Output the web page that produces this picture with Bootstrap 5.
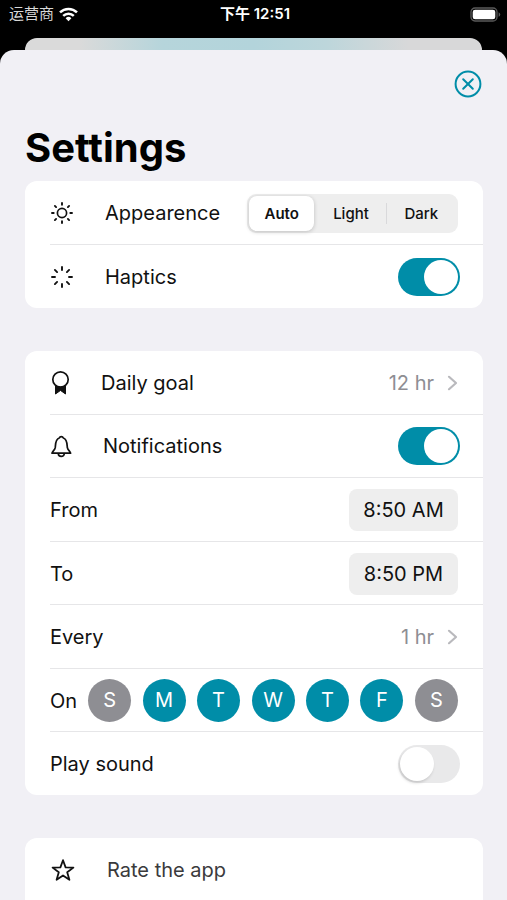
<!DOCTYPE html>
<html lang="en">
<head>
<meta charset="utf-8">
<meta name="viewport" content="width=device-width, initial-scale=1">
<title>Settings</title>
<link href="https://cdn.jsdelivr.net/npm/bootstrap@5.3.0/dist/css/bootstrap.min.css" rel="stylesheet">
<style>
  :root { --teal: #008da8; --sheet: #f1f0f5; --rule: #e6e6e8; --fill: #eeeeee; --muted: #8e8e93; }
  body { font-family: Inter, "Noto Sans CJK SC", sans-serif; font-size: 20px; line-height: 28px; color: #111; }
  .status-bar { height: 38px; padding: 0 6px 10px 9px; font-size: 15px; line-height: 20px; }
  .status-side { flex: 1 1 0; gap: 5px; }
  .carrier { color: #d8d8d8; }
  .clock { font-size: 15px; font-weight: 600; }
  .peek { height: 12px; margin: 0 25px; border-radius: 12px 12px 0 0;
    background: linear-gradient(90deg, #dadada 12%, #b6d5db 30%, #b3d4db 50%, #bdd6db 66%, #d8d8d9 84%); }
  .sheet { background: var(--sheet); border-radius: 14px 14px 0 0; padding: 20px 24px 0 25px; }
  .close-btn { width: 28px; height: 28px; line-height: 0; color: var(--teal); margin-right: 1px; }
  .page-title { font-size: 40px; line-height: 48px; font-weight: 700; color: #000; margin: 26px 0 9px; }
  .panel { background: #fff; border-radius: 12px; margin-bottom: 43px; }
  .panel-short { min-height: 127px; }
  .panel-long { min-height: 444px; }
  .panel-last { margin-bottom: 0; border-radius: 12px 12px 0 0; }
  .setting { flex: 1 1 0; margin-left: 25px; padding-top: 1px; padding-right: 25px; min-height: 62px; }
  .setting + .setting { border-top: 1px solid var(--rule); }
  .setting-toggle { padding-right: 23px; }
  .with-icon { gap: 31px; }
  .soft { color: #3a3a3c; }
  .detail { color: var(--muted); gap: 13px; text-decoration: none; }
  .segments { background: var(--fill); border-radius: 9px; width: 211px; padding: 2px; }
  .segments label { flex: 1 1 0; margin: 0 2px; padding: 7px 0; border: 0; border-radius: 8px; font-size: 15px; line-height: 21px; font-weight: 500; color: #111; text-align: center; cursor: pointer; }
  .segments label:first-of-type { margin-left: 0; }
  .segments .btn-check:checked + label { background: #fff; box-shadow: 0 1px 4px rgba(0,0,0,.2); font-weight: 600; }
  .segments .divider { width: 1px; height: 21px; background: #d9d9db; }
  .toggle { appearance: none; width: 62px; height: 38px; border-radius: 19px; background: #e9e9ea; margin: 0; padding: 2px; cursor: pointer; }
  .toggle::before { content: ""; display: block; width: 34px; height: 34px; border-radius: 50%; background: #fff; box-shadow: -1px 2px 3px rgba(0,0,0,.15); }
  .toggle:checked { background: var(--teal); }
  .toggle:checked::before { margin-left: auto; box-shadow: none; }
  .time-btn { background: var(--fill); border: 0; border-radius: 8px; padding: 7px 14px; min-width: 109px; font-size: 20px; line-height: 28px; color: #111; }
  .days { margin-left: 11px; }
  .day { width: 43px; height: 43px; border: 0; border-radius: 50%; padding: 0; background: var(--muted); color: #fff; font-size: 20px; line-height: 43px; }
  .day[aria-pressed="true"] { background: var(--teal); }
</style>
<script src="https://cdn.jsdelivr.net/npm/bootstrap@5.3.0/dist/js/bootstrap.bundle.min.js"></script>
</head>
<body class="bg-black min-vh-100 d-flex flex-column">
<header class="status-bar d-flex align-items-center text-white flex-shrink-0">
  <div class="status-side d-flex align-items-center">
    <span class="carrier">运营商</span>
    <svg width="19" height="15" viewBox="0 0 19 15" fill="none" stroke="#fff" stroke-width="2.5" aria-label="Wi-Fi"><path d="M1 5.400a12.200 12.200 0 0 1 17 0M4.200 8.900a7.600 7.600 0 0 1 10.600 0"/><path d="M9.500 14.200 6.600 11.200a4.200 4.200 0 0 1 5.800 0z" fill="#fff" stroke="none"/></svg>
  </div>
  <span class="clock">下午 12:51</span>
  <div class="status-side d-flex justify-content-end">
    <svg width="31" height="15" viewBox="0 0 31 15" aria-label="Battery"><rect x="1" y="1" width="26" height="13" rx="4" fill="none" stroke="#5a5a5a" stroke-width="1.300"/><rect x="2.700" y="2.700" width="22.600" height="9.600" rx="2.400" fill="#fff"/><path d="M28.600 5.200v4.600q1.600-.7 1.600-2.300t-1.600-2.300z" fill="#5a5a5a"/></svg>
  </div>
</header>
<div class="peek flex-shrink-0"></div>
<main class="sheet flex-fill d-flex flex-column">
  <div class="d-flex justify-content-end">
    <button type="button" class="close-btn btn p-0 border-0" aria-label="Close">
      <svg width="28" height="28" viewBox="0 0 28 28" fill="none" stroke="currentColor" stroke-width="2" stroke-linecap="round"><circle cx="14" cy="14" r="12.400"/><path d="M9.200 9.200l9.600 9.600M18.800 9.200l-9.600 9.600"/></svg>
    </button>
  </div>
  <h1 class="page-title">Settings</h1>

  <section class="panel panel-short d-flex flex-column">
    <div class="setting d-flex align-items-center justify-content-between">
      <span class="with-icon d-flex align-items-center">
        <svg width="24" height="24" viewBox="0 0 24 24" fill="none" stroke="#111" stroke-width="1.900" stroke-linecap="round"><circle cx="12" cy="12" r="4.600" stroke-width="1.700"/><path d="M12 2v1.700M12 20.300V22M2 12h1.700M20.300 12H22M4.900 4.900l1.200 1.200M17.900 17.900l1.200 1.200M4.900 19.100l1.200-1.200M17.900 6.100l1.200-1.200"/></svg>
        Appearence
      </span>
      <div class="segments d-flex align-items-center" role="group" aria-label="Appearence">
        <input class="btn-check" type="radio" name="theme" id="themeAuto" checked><label for="themeAuto">Auto</label>
        <input class="btn-check" type="radio" name="theme" id="themeLight"><label for="themeLight">Light</label>
        <span class="divider"></span>
        <input class="btn-check" type="radio" name="theme" id="themeDark"><label for="themeDark">Dark</label>
      </div>
    </div>
    <div class="setting setting-toggle d-flex align-items-center justify-content-between">
      <label class="with-icon d-flex align-items-center" for="haptics">
        <svg width="24" height="24" viewBox="0 0 24 24" fill="none" stroke="#111" stroke-width="1.900" stroke-linecap="round"><path d="M12 2v3M12 19v3M2 12h3M19 12h3M4.900 4.900l2.200 2.200M16.900 16.900l2.200 2.200M4.900 19.100l2.200-2.200M16.900 7.100l2.200-2.200"/></svg>
        Haptics
      </label>
      <input class="toggle" type="checkbox" role="switch" id="haptics" checked>
    </div>
  </section>

  <section class="panel panel-long d-flex flex-column">
    <div class="setting d-flex align-items-center justify-content-between">
      <span class="with-icon d-flex align-items-center">
        <svg width="20" height="26" viewBox="0 0 20 26" fill="none" stroke="#111" stroke-width="1.700"><circle cx="10.500" cy="9.500" r="7.700"/><path d="M5.500 15.500q5 3.400 10 0v8.500l-5-3.600-5 3.600z" fill="#111" stroke="#111" stroke-width="1" stroke-linejoin="round"/></svg>
        Daily goal
      </span>
      <a href="#" class="detail d-flex align-items-center">12 hr
        <svg width="11" height="16" viewBox="0 0 11 16" fill="none" stroke="#b9b9bd" stroke-width="2.200" stroke-linecap="round" stroke-linejoin="round"><path d="M2 1.800 9 8l-7 6.200"/></svg>
      </a>
    </div>
    <div class="setting setting-toggle d-flex align-items-center justify-content-between">
      <label class="with-icon d-flex align-items-center" for="notify">
        <svg width="22" height="24" viewBox="0 0 22 24" fill="none" stroke="#111" stroke-width="1.700" stroke-linejoin="round"><path d="M2 19.200h18.600c.3-1.400-3-3-3.300-5.800C17 9.500 17.200 5 13.300 4a2.100 2.100 0 0 0-4 0C5.400 5 5.600 9.500 5.300 13.400 5 16.200 1.700 17.800 2 19.200zM8.300 19.500a3 2.900 0 0 0 6 0"/></svg>
        Notifications
      </label>
      <input class="toggle" type="checkbox" role="switch" id="notify" checked>
    </div>
    <div class="setting d-flex align-items-center justify-content-between">
      <span>From</span>
      <button type="button" class="time-btn" aria-label="From 8:50 AM">8:50 AM</button>
    </div>
    <div class="setting d-flex align-items-center justify-content-between">
      <span>To</span>
      <button type="button" class="time-btn" aria-label="To 8:50 PM">8:50 PM</button>
    </div>
    <div class="setting d-flex align-items-center justify-content-between">
      <span>Every</span>
      <a href="#" class="detail d-flex align-items-center">1 hr
        <svg width="11" height="16" viewBox="0 0 11 16" fill="none" stroke="#b9b9bd" stroke-width="2.200" stroke-linecap="round" stroke-linejoin="round"><path d="M2 1.800 9 8l-7 6.200"/></svg>
      </a>
    </div>
    <div class="setting d-flex align-items-center">
      <span>On</span>
      <div class="days d-flex flex-fill justify-content-between">
        <button type="button" class="day" aria-pressed="false">S</button>
        <button type="button" class="day" aria-pressed="true">M</button>
        <button type="button" class="day" aria-pressed="true">T</button>
        <button type="button" class="day" aria-pressed="true">W</button>
        <button type="button" class="day" aria-pressed="true">T</button>
        <button type="button" class="day" aria-pressed="true">F</button>
        <button type="button" class="day" aria-pressed="false">S</button>
      </div>
    </div>
    <div class="setting setting-toggle d-flex align-items-center justify-content-between">
      <label for="sound">Play sound</label>
      <input class="toggle" type="checkbox" role="switch" id="sound">
    </div>
  </section>

  <section class="panel panel-last flex-fill">
    <div class="setting d-flex align-items-center">
      <span class="with-icon soft d-flex align-items-center">
        <svg width="26" height="24" viewBox="0 0 26 24" fill="none" stroke="#111" stroke-width="1.800" stroke-linejoin="round"><path d="M13 2.200l2.600 7.200 7.800.2-6.200 4.700 2.200 7.500L13 17.400l-6.400 4.400 2.200-7.500-6.200-4.700 7.800-.2z"/></svg>
        Rate the app
      </span>
    </div>
  </section>
</main>
</body>
</html>
